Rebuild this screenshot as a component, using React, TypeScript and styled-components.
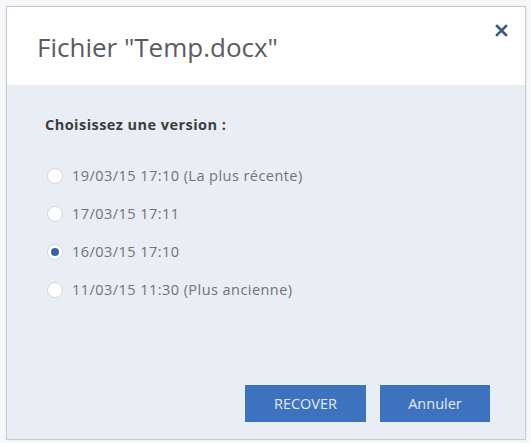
import React, { useState } from "react";
import styled, { createGlobalStyle } from "styled-components";

const GlobalStyle = createGlobalStyle`
  html, body {
    margin: 0;
    padding: 0;
    background: #f7f8fa;
    font-family: "Open Sans", "Liberation Sans", sans-serif;
  }
`;

const Page = styled.div`
  width: 531px;
  height: 443px;
  padding: 6px 5px 3px 6px;
  box-sizing: border-box;
  display: flex;
`;

const Dialog = styled.div`
  flex: 1;
  display: flex;
  flex-direction: column;
  border: 1px solid #c5cad1;
  background: #e9eef4;
  box-shadow: 0 0 2px rgba(0, 0, 0, 0.08);
`;

const Header = styled.div`
  height: 78px;
  background: #ffffff;
  display: flex;
  align-items: flex-start;
  justify-content: space-between;
  padding: 0 16px 0 30px;
`;

const Title = styled.h1`
  margin: 22px 0 0;
  font-size: 26px;
  font-weight: 400;
  line-height: normal;
  color: #585c61;
`;

const CloseButton = styled.button`
  margin-top: 17px;
  width: 16px;
  height: 16px;
  padding: 0;
  border: none;
  background: none;
  cursor: pointer;
  color: #3c5a84;
`;

const Body = styled.div`
  flex: 1;
  display: flex;
  flex-direction: column;
  padding: 30px 40px 0 38px;
`;

const Label = styled.div`
  font-size: 14.5px;
  font-weight: 700;
  letter-spacing: 0.45px;
  color: #3a3d40;
  margin-bottom: 30px;
`;

const Options = styled.div`
  display: flex;
  flex-direction: column;
  gap: 15px;
  padding-left: 2px;
`;

const Option = styled.label`
  display: flex;
  align-items: center;
  gap: 9px;
  height: 23px;
  font-size: 14.5px;
  letter-spacing: 0.45px;
  color: #707377;
  cursor: pointer;
`;

const Circle = styled.span<{ $checked: boolean }>`
  width: 16px;
  height: 16px;
  flex-shrink: 0;
  box-sizing: border-box;
  border-radius: 50%;
  background: #ffffff;
  border: 1px solid #d4d8de;
  display: flex;
  align-items: center;
  justify-content: center;

  &::after {
    content: "";
    width: 8px;
    height: 8px;
    border-radius: 50%;
    background: ${(p) => (p.$checked ? "#3763a6" : "transparent")};
  }
`;

const Footer = styled.div`
  display: flex;
  justify-content: flex-end;
  gap: 14px;
  padding: 0 35px 17px 0;
`;

const Button = styled.button<{ $width: number }>`
  width: ${(p) => p.$width}px;
  height: 37px;
  border: none;
  background: #3c72be;
  color: #e4ecf7;
  font-family: "Open Sans", "Liberation Sans", sans-serif;
  font-size: 14.5px;
  cursor: pointer;
`;

const versions = [
  "19/03/15 17:10 (La plus récente)",
  "17/03/15 17:11",
  "16/03/15 17:10",
  "11/03/15 11:30 (Plus ancienne)",
];

export default function App() {
  const [selected, setSelected] = useState(2);
  return (
    <>
      <GlobalStyle />
      <Page>
        <Dialog>
          <Header>
            <Title>Fichier "Temp.docx"</Title>
            <CloseButton aria-label="Fermer">
              <svg width="13" height="13" viewBox="0 0 13 13">
                <path d="M2 2 L11 11 M11 2 L2 11" stroke="currentColor" strokeWidth="2.6" strokeLinecap="square" />
              </svg>
            </CloseButton>
          </Header>
          <Body>
            <Label>Choisissez une version :</Label>
            <Options>
              {versions.map((v, i) => (
                <Option key={v} onClick={() => setSelected(i)}>
                  <Circle $checked={selected === i} />
                  {v}
                </Option>
              ))}
            </Options>
          </Body>
          <Footer>
            <Button $width={121}>RECOVER</Button>
            <Button $width={110}>Annuler</Button>
          </Footer>
        </Dialog>
      </Page>
    </>
  );
}
